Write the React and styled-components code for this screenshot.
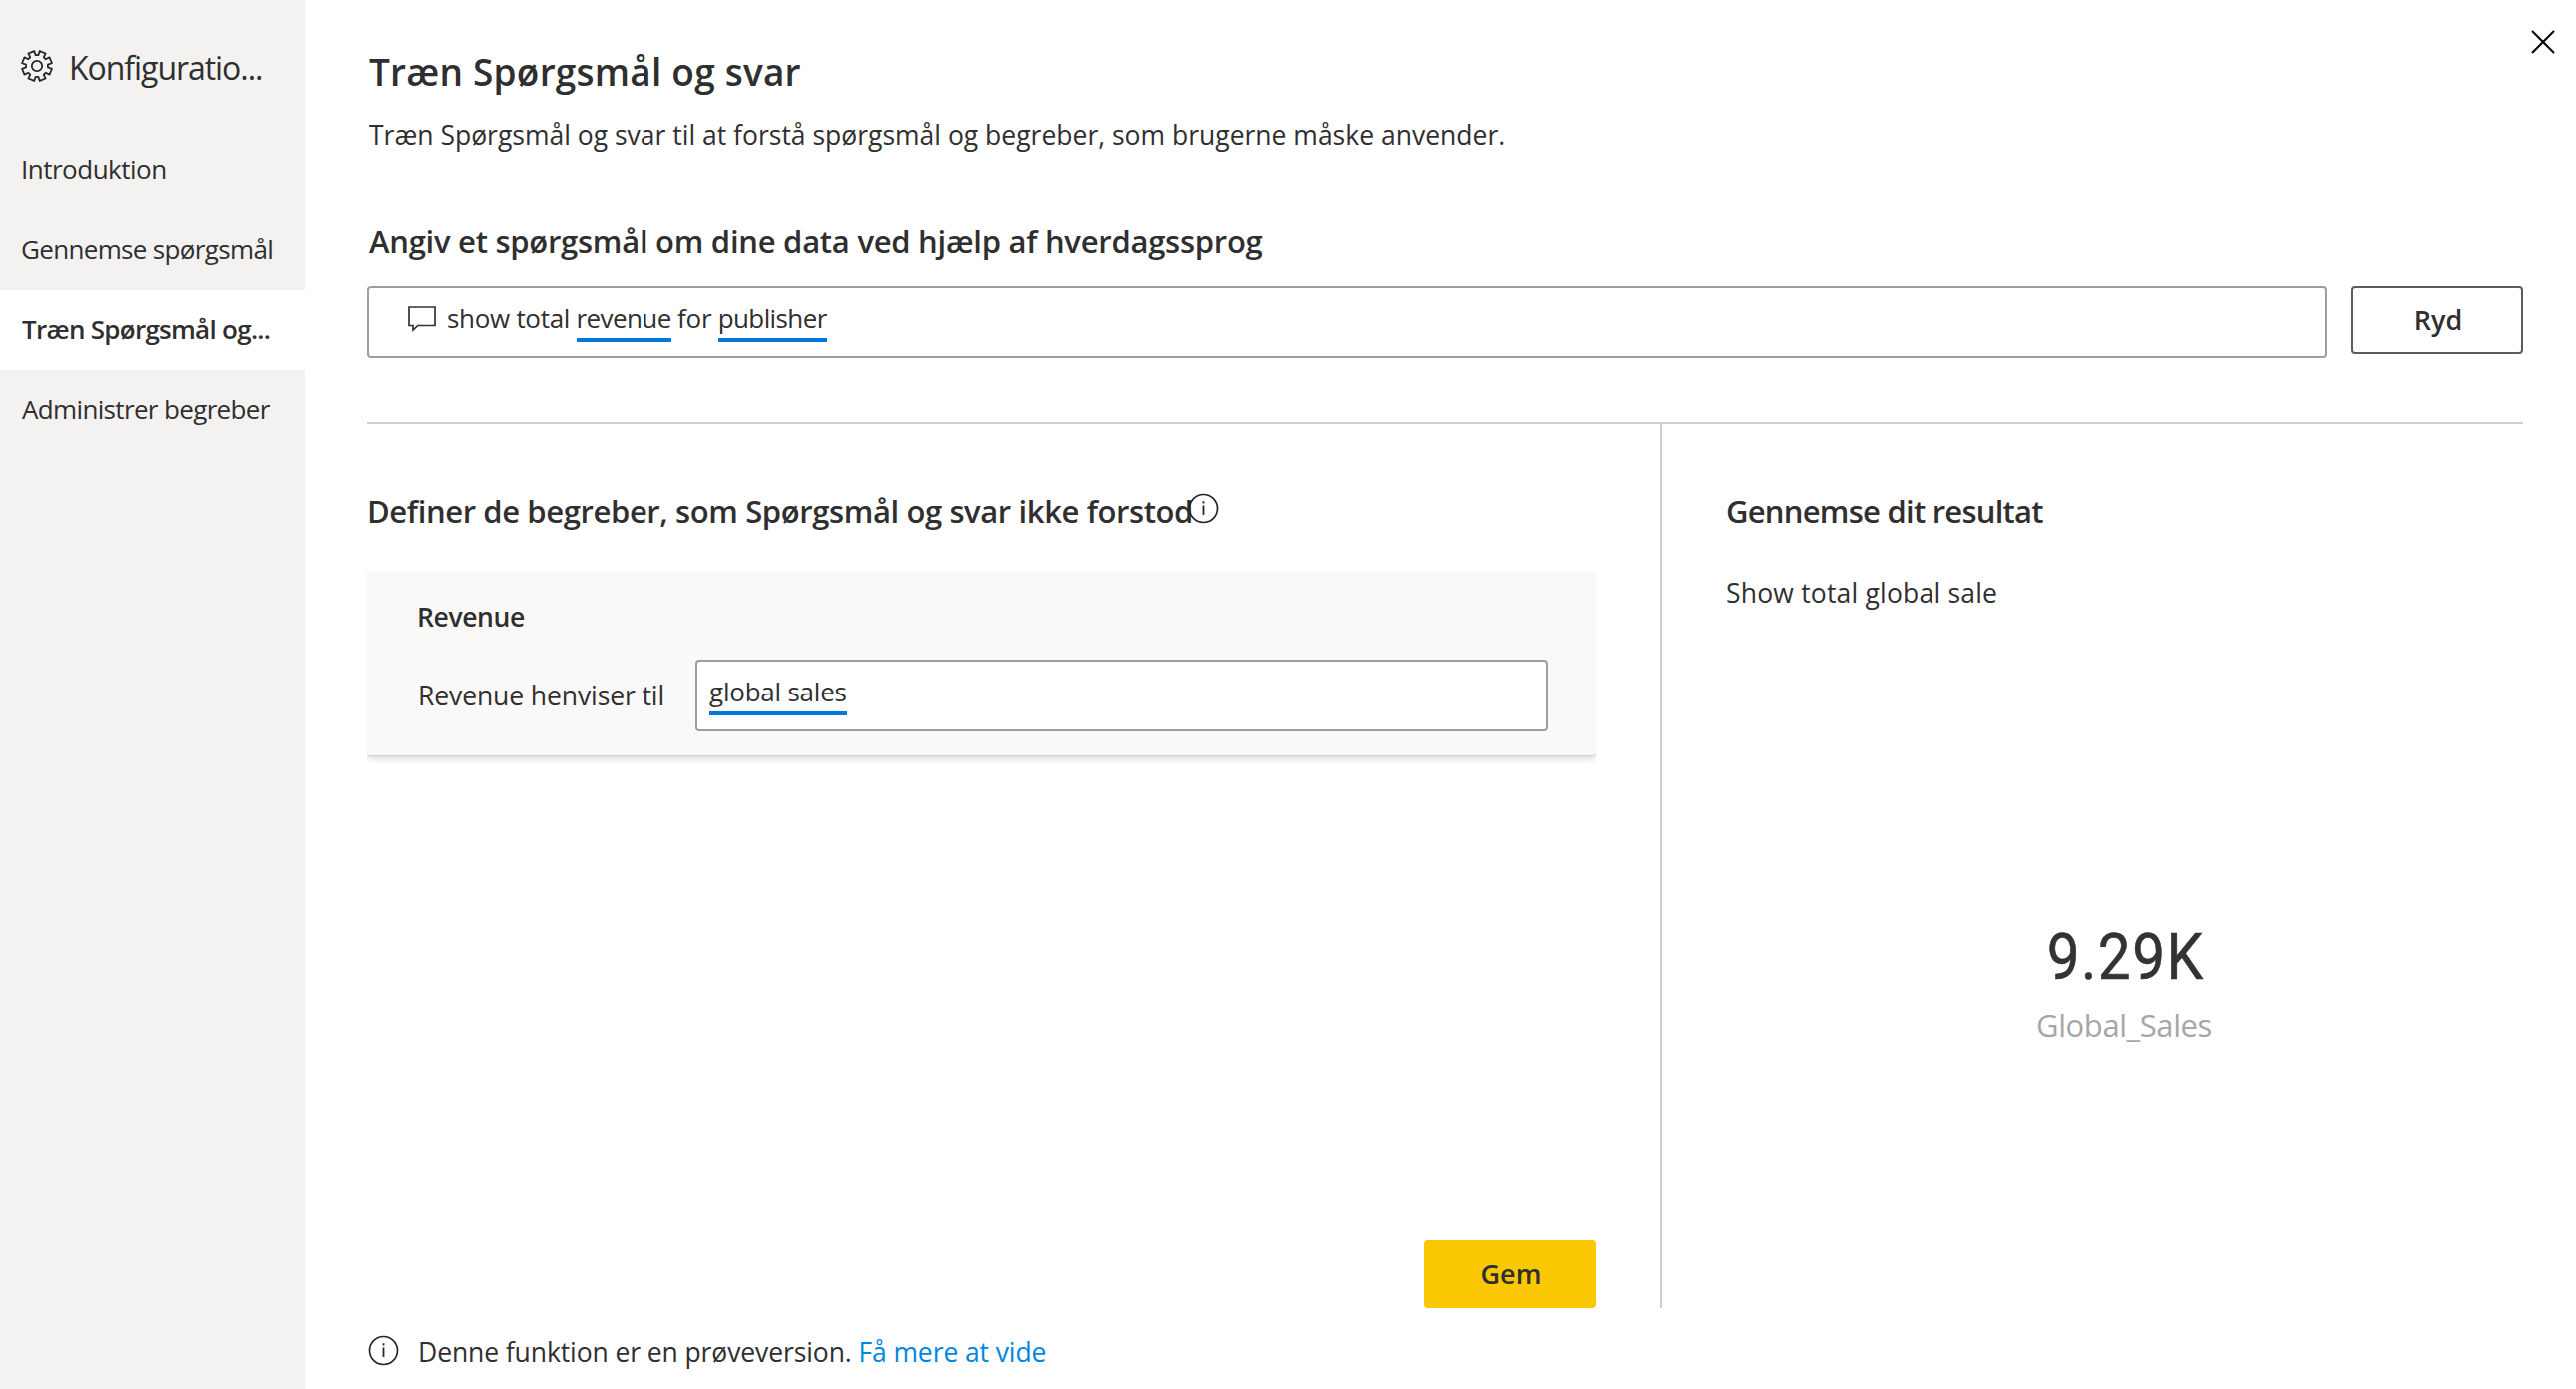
import React from 'react';
import styled, { createGlobalStyle } from 'styled-components';

const GlobalStyle = createGlobalStyle`
  *, *::before, *::after { box-sizing: border-box; }
  body {
    margin: 0;
    background: #fff;
    color: #2f2f2f;
    font-family: "Open Sans", "Noto Sans", sans-serif;
    overflow: hidden;
  }
  h1, h2, h3, p { margin: 0; font-weight: inherit; }
`;

const Page = styled.div`
  display: grid;
  grid-template-columns: 305px 1fr;
  height: 1390px;
`;

const Sidebar = styled.nav`
  background: #f3f2f1;
`;

const SidebarHeader = styled.div`
  display: flex;
  align-items: center;
  height: 130px;
  padding: 2px 0 0 21px;
`;

const SidebarTitle = styled.h2`
  margin: 2px 0 0 16px;
  font-size: 32px;
  letter-spacing: -1.05px;
  white-space: nowrap;
`;

const NavItem = styled.a`
  display: flex;
  align-items: center;
  height: 80px;
  padding: 0 0 2px ${(p) => p.$inset || 21}px;
  font-size: 26px;
  font-weight: ${(p) => (p.$active ? 600 : 400)};
  letter-spacing: ${(p) => p.$tracking}px;
  background: ${(p) => (p.$active ? '#fff' : 'transparent')};
  white-space: nowrap;
`;

const Main = styled.main`
  position: relative;
  padding: 47px 53px 0 62px;
`;

const CloseButton = styled.button`
  position: absolute;
  top: 30px;
  right: 21px;
  width: 24px;
  height: 24px;
  padding: 0;
  border: 0;
  background: none;
  svg { display: block; }
`;

const Title = styled.h1`
  padding-left: 2px;
  font-size: 37px;
  font-weight: 600;
  line-height: 50px;
  letter-spacing: 0.22px;
`;

const Body = styled.p`
  font-size: 26.5px;
  line-height: 36px;
  letter-spacing: ${(p) => p.$tracking || 0}px;
  white-space: nowrap;
`;

const Subtitle = styled(Body)`
  margin-top: 20px;
  padding-left: 2px;
`;

const Heading = styled.h2`
  font-size: 31px;
  font-weight: 600;
  line-height: 42px;
  letter-spacing: ${(p) => p.$tracking}px;
  white-space: nowrap;
`;

const QuestionHeading = styled(Heading)`
  margin-top: 67px;
  padding-left: 2px;
`;

const QuestionRow = styled.div`
  display: flex;
  align-items: flex-start;
  gap: 24px;
  margin-top: 24px;
`;

const Field = styled.div`
  display: flex;
  flex: 1;
  align-items: flex-start;
  height: 72px;
  border: 2px solid #9e9e9e;
  border-radius: 4px;
  background: #fff;
  font-size: 26px;
  letter-spacing: -0.3px;
  white-space: pre;
`;

const QuestionField = styled(Field)`
  padding: 11px 0 0 39px;
  line-height: 39px;
  svg { margin: 7px 11px 0 0; }
`;

const Token = styled.span`
  display: block;
  line-height: inherit;
  letter-spacing: ${(p) => p.$tracking}px;
  border-bottom: 4px solid #0078dc;
`;

const Button = styled.button`
  width: 172px;
  height: 68px;
  padding: 0 0 2px 2px;
  border: ${(p) => (p.$primary ? '0' : '2px solid #5c5c5c')};
  border-radius: 4px;
  background: ${(p) => (p.$primary ? '#f9c802' : '#fff')};
  color: #2f2f2f;
  font: 600 27px "Open Sans", "Noto Sans", sans-serif;
`;

const Columns = styled.div`
  display: grid;
  grid-template-columns: 1294px 1fr;
  height: 887px;
  margin-top: 64px;
  border-top: 2px solid #cfcfcf;
`;

const TermsColumn = styled.section`
  display: flex;
  flex-direction: column;
  padding: 66px 64px 0 0;
`;

const TermsHeader = styled.div`
  display: flex;
  align-items: flex-start;
  svg { margin: 3px 0 0 -5px; }
`;

const TermCard = styled.div`
  height: 184px;
  margin-top: 40px;
  padding: 27px 48px 0 51px;
  border-radius: 4px;
  background: #faf9f8;
  box-shadow: 0 3.2px 7.2px rgba(0, 0, 0, 0.13), 0 0.6px 1.8px rgba(0, 0, 0, 0.11);
  clip-path: inset(0 0 -20px 0);
`;

const TermName = styled.h3`
  margin-left: -1px;
  font-size: 26.5px;
  font-weight: 600;
  line-height: 36px;
  letter-spacing: -0.38px;
`;

const TermRow = styled.div`
  display: grid;
  grid-template-columns: 278px 1fr;
  align-items: center;
  margin-top: 25px;
`;

const TermField = styled(Field)`
  padding: 10px 0 0 12px;
  line-height: 40px;
`;

const SaveBar = styled.div`
  display: flex;
  justify-content: flex-end;
  margin-top: auto;
`;

const ResultColumn = styled.section`
  padding: 66px 0 0 64px;
  border-left: 2px solid #cfcfcf;
`;

const ResultText = styled(Body)`
  margin-top: 43px;
`;

const Card = styled.div`
  display: flex;
  flex-direction: column;
  align-items: center;
  gap: 12px;
  margin-top: 312px;
`;

const CardValue = styled.div`
  padding-left: 3px;
  color: #333;
  font: 400 65px/70px Roboto, sans-serif;
  letter-spacing: 1.6px;
  transform: scaleX(0.9);
  -webkit-text-stroke: 0.6px #333;
`;

const CardLabel = styled.div`
  color: #a6a6a6;
  font-size: 31px;
  line-height: 42px;
  letter-spacing: -0.42px;
`;

const Footer = styled.footer`
  display: flex;
  align-items: center;
  gap: 19px;
  margin-top: 26px;
  svg { margin: -3px 0 0 1px; }
`;

const Link = styled.a`
  color: #0086e0;
`;

const TOOTH_PROFILE = [[-10.5, 15.2], [-7, 11], [7, 11], [10.5, 15.2]];

const gearOutline = Array.from({ length: 8 }, (_, i) =>
  TOOTH_PROFILE.map(([angle, radius]) => {
    const t = ((i * 45 + angle - 90) * Math.PI) / 180;
    return `${(16 + radius * Math.cos(t)).toFixed(2)},${(16 + radius * Math.sin(t)).toFixed(2)}`;
  }).join(' ')
).join(' ');

const GearIcon = () => (
  <svg width="32" height="32" viewBox="0 0 32 32" fill="none" stroke="#262626" strokeWidth="1.8" strokeLinejoin="round">
    <polygon points={gearOutline} />
    <circle cx="16" cy="16" r="5.2" />
  </svg>
);

const InfoIcon = () => (
  <svg width="31" height="31" viewBox="0 0 31 31" fill="none" stroke="#262626">
    <circle cx="15.5" cy="15.5" r="14" strokeWidth="1.7" />
    <path d="M15.5 12.5v9.5M15.5 8.3v2.2" strokeWidth="1.8" />
  </svg>
);

const ChatIcon = () => (
  <svg width="28" height="26" viewBox="0 0 28 26" fill="none" stroke="#333" strokeWidth="1.7">
    <path d="M1 1h26v18.5H9.8L5 24v-4.5H1z" />
  </svg>
);

const CloseIcon = () => (
  <svg width="24" height="24" viewBox="0 0 24 24" stroke="#000" strokeWidth="2">
    <path d="M1 1l22 22M23 1L1 23" />
  </svg>
);

export default function App() {
  return (
    <>
      <GlobalStyle />
      <Page>
        <Sidebar>
          <SidebarHeader>
            <GearIcon />
            <SidebarTitle>Konfiguratio...</SidebarTitle>
          </SidebarHeader>
          <NavItem $tracking={-0.5}>Introduktion</NavItem>
          <NavItem $tracking={-0.66}>Gennemse spørgsmål</NavItem>
          <NavItem $tracking={-0.72} $active $inset={22}>Træn Spørgsmål og...</NavItem>
          <NavItem $tracking={-0.65} $inset={22}>Administrer begreber</NavItem>
        </Sidebar>
        <Main>
          <CloseButton aria-label="Luk"><CloseIcon /></CloseButton>
          <Title>Træn Spørgsmål og svar</Title>
          <Subtitle>Træn Spørgsmål og svar til at forstå spørgsmål og begreber, som brugerne måske anvender.</Subtitle>
          <QuestionHeading $tracking={-0.26}>Angiv et spørgsmål om dine data ved hjælp af hverdagssprog</QuestionHeading>
          <QuestionRow>
            <QuestionField>
              <ChatIcon />
              <span>show total </span>
              <Token $tracking={-0.6}>revenue</Token>
              <span> for </span>
              <Token $tracking={-0.6}>publisher</Token>
            </QuestionField>
            <Button>Ryd</Button>
          </QuestionRow>
          <Columns>
            <TermsColumn>
              <TermsHeader>
                <Heading $tracking={-0.39}>Definer de begreber, som Spørgsmål og svar ikke forstod</Heading>
                <InfoIcon />
              </TermsHeader>
              <TermCard>
                <TermName>Revenue</TermName>
                <TermRow>
                  <Body $tracking={-0.1}>Revenue henviser til</Body>
                  <TermField><Token $tracking={-0.22}>global sales</Token></TermField>
                </TermRow>
              </TermCard>
              <SaveBar><Button $primary>Gem</Button></SaveBar>
            </TermsColumn>
            <ResultColumn>
              <Heading $tracking={-0.75}>Gennemse dit resultat</Heading>
              <ResultText $tracking={0.2}>Show total global sale</ResultText>
              <Card>
                <CardValue>9.29K</CardValue>
                <CardLabel>Global_Sales</CardLabel>
              </Card>
            </ResultColumn>
          </Columns>
          <Footer>
            <InfoIcon />
            <Body $tracking={-0.1}>Denne funktion er en prøveversion. <Link>Få mere at vide</Link></Body>
          </Footer>
        </Main>
      </Page>
    </>
  );
}
